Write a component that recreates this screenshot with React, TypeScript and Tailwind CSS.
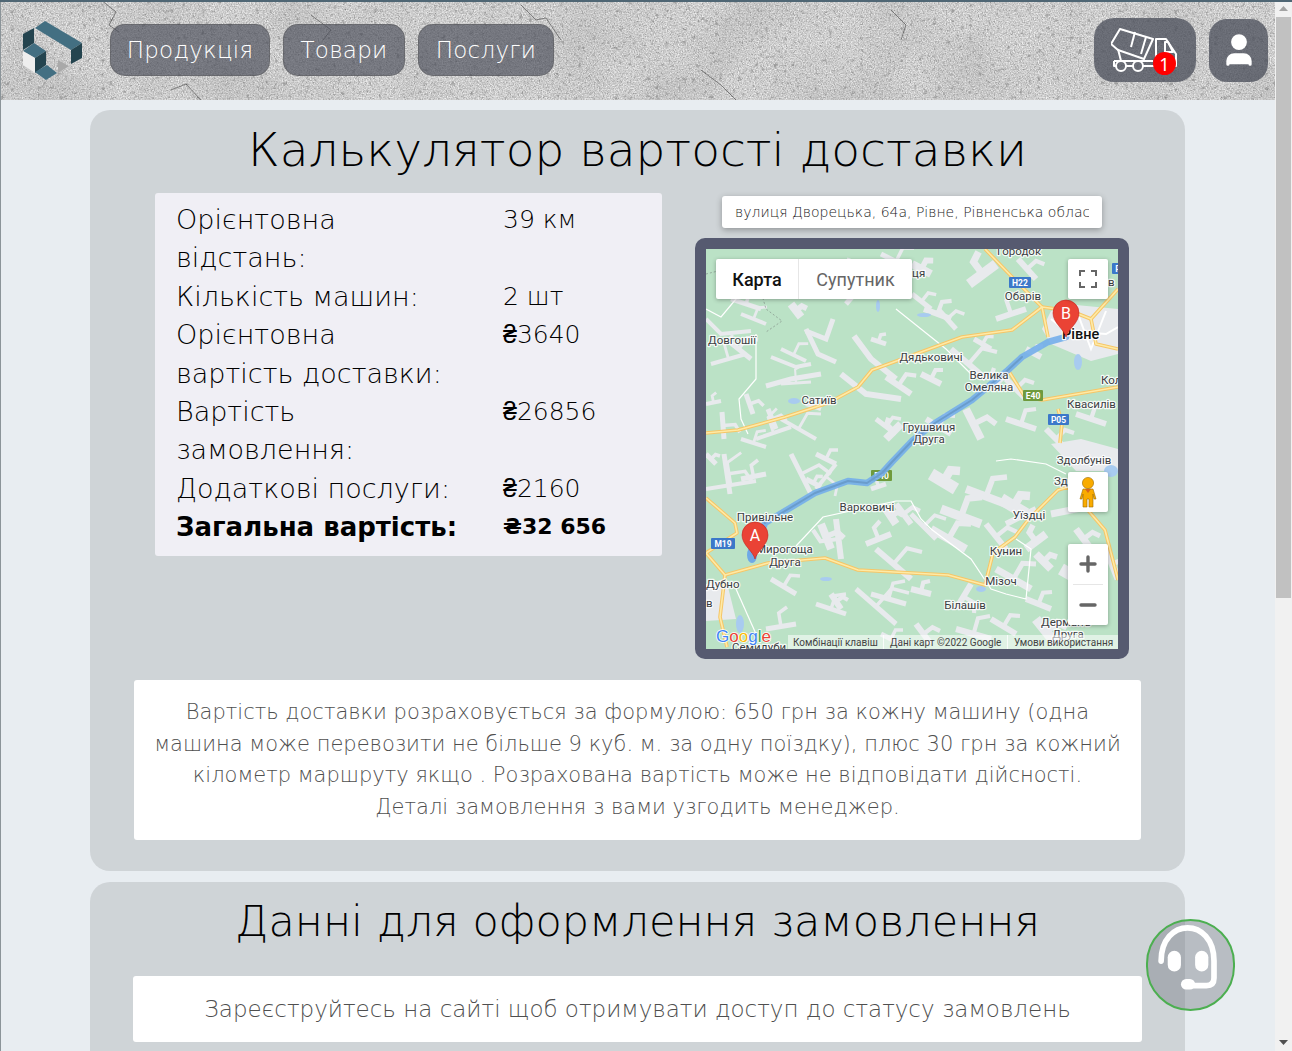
import React from 'react';
import { Plus, Minus, User } from 'lucide-react';

// grey built-up patches on the map: points, then stroke width
const patches: [string, number][] = [
  ['100,80 112,105 130,113', 5], ['127,70 120,90 100,82', 5], ['65,108 90,118 105,115', 4], ['75,100 100,112', 4],
  ['60,137 85,130 115,125', 5], ['75,135 105,133', 3], ['148,87 165,110 190,130', 6], ['165,90 180,95', 5],
  ['180,128 205,145', 6], ['135,125 160,145 195,150', 6], ['50,190 85,178', 4], ['62,160 70,180', 5],
  ['40,145 47,165', 5], ['16,163 18,190', 5], ['0,155 15,152', 4], ['5,115 40,105', 4], ['20,90 45,110', 5],
  ['25,50 55,60', 5], ['35,65 60,75', 4], ['85,55 95,68', 8], ['0,70 15,85 45,82', 4], ['100,155 115,160', 4],
  ['180,190 195,175', 8], ['170,170 190,185', 5], ['35,190 60,198', 4], ['75,170 110,190', 4], ['140,55 170,20', 5],
  ['263,35 290,15', 10], ['206,15 225,25', 8], ['218,60 245,70', 6], ['290,70 320,60', 6], ['232,60 250,80', 5],
  ['245,100 280,130', 6], ['268,90 285,100', 5], ['300,130 320,150', 6], ['215,125 235,135', 6], ['220,170 245,185', 6],
  ['260,160 275,190', 8], ['300,170 330,180', 6], ['340,180 360,200', 6], ['370,165 400,175', 6], ['285,140 300,125', 6],
  ['320,100 335,108', 6], ['206,45 225,60', 5], ['175,5 205,20', 5], ['312,10 330,30', 6],
  ['85,205 105,245', 5], ['18,205 24,245', 5], ['0,240 50,232', 4], ['35,230 60,225', 5], ['100,230 115,238', 5],
  ['110,205 130,215', 5], ['0,205 10,215', 5], ['130,215 110,240', 4], ['115,275 125,300', 8], ['165,240 180,235', 5],
  ['180,260 190,275', 8], ['135,310 130,270', 6], ['125,345 135,360', 6], ['65,330 90,345', 5], ['170,300 205,330', 6],
  ['190,255 205,275', 6], ['160,295 185,285', 6], ['165,345 200,355', 5], ['110,355 140,365', 5], ['150,340 190,375', 5],
  ['60,380 90,375', 5], ['175,385 195,395', 5], ['225,225 250,240', 12], ['235,260 275,275', 9], ['260,240 300,255', 8],
  ['205,265 230,290', 5], ['225,280 260,300', 8], ['295,250 320,265', 12], ['300,275 330,260', 6], ['280,275 300,300', 6],
  ['320,300 340,285', 8], ['345,265 395,255', 7], ['330,305 345,320', 8], ['355,320 390,340', 12], ['205,340 225,345', 6],
  ['265,335 250,360', 6], ['330,370 350,395', 10], ['320,350 345,360', 6], ['250,380 285,390', 6], ['210,375 225,395', 6],
  ['370,280 385,300', 7], ['290,320 325,340', 7], ['285,370 310,385', 6], ['400,300 412,330', 7],
];

// two-point patches get a short side branch so they read as irregular plots
const branch = (pts: string) => {
  const p = pts.split(' ').map((s) => s.split(',').map(Number));
  if (p.length !== 2) return null;
  const [[a, b], [c, d]] = p;
  const mx = (a + c) / 2;
  const my = (b + d) / 2;
  return `${mx},${my} ${mx + (d - b) * 0.45},${my - (c - a) * 0.45} ${mx + (c - a) * 0.3 + (d - b) * 0.6},${my + (d - b) * 0.3 - (c - a) * 0.6}`;
};

const yellowRoads = [
  '0,184 32,181 79,168 122,154 152,138 166,121 256,88 306,81 336,58 365,62 385,70 412,40',
  '279,0 310,32 336,58 342,88',
  '302,121 319,148 336,151 412,138',
  '352,160 356,174 354,194',
  '385,70 390,95 412,100',
  '19,326 62,314 119,309 152,321 242,326 279,336 287,304 309,288 322,271 352,241 362,238 399,281 412,331',
  '0,249 29,274 31,284 0,304 19,326 14,368 21,398',
];

const labels: [string, number, number, 'start' | 'middle' | 'end'][] = [
  ['Городок', 313, 6, 'middle'], ['ця', 206, 28, 'start'], ['Обарів', 317, 51, 'middle'], ['в', 402, 37, 'start'],
  ['Довгошії', 50, 95, 'end'], ['Дядьковичі', 225, 112, 'middle'], ['Велика', 283, 130, 'middle'], ['Омеляна', 283, 142, 'middle'],
  ['Сатиїв', 113, 155, 'middle'], ['Кол', 395, 135, 'start'], ['Квасилів', 361, 159, 'start'], ['Грушвиця', 223, 182, 'middle'],
  ['Друга', 223, 194, 'middle'], ['Здолбунів', 378, 215, 'middle'], ['Зд', 348, 236, 'start'], ['Привільне', 59, 272, 'middle'],
  ['Варковичі', 161, 262, 'middle'], ['Уїздці', 323, 270, 'middle'], ['Мирогоща', 50, 304, 'start'], ['Друга', 79, 317, 'middle'],
  ['Кунин', 300, 306, 'middle'], ['Дубно', 0, 339, 'start'], ['в', 0, 358, 'start'], ['Мізоч', 295, 336, 'middle'],
  ['Білашів', 259, 360, 'middle'], ['Дерманъ', 360, 377, 'middle'], ['Друга', 362, 389, 'middle'], ['Семидуби', 26, 402, 'start'],
];

const shields: [string, number, number, number, string][] = [
  ['H22', 303, 28, 22, '#3b78c9'], ['E40', 317, 141, 20, '#6f9a3d'], ['P05', 342, 165, 21, '#3b78c9'],
  ['E40', 165, 221, 21, '#6f9a3d'], ['M19', 5, 289, 24, '#3b78c9'], ['P', 406, 14, 12, '#3b78c9'],
];

const rows: [React.ReactNode, string][] = [
  [<>Орієнтовна<br />відстань:</>, '39 км'],
  ['Кількість машин:', '2 шт'],
  [<>Орієнтовна<br />вартість доставки:</>, '₴3640'],
  [<>Вартість<br />замовлення:</>, '₴26856'],
  ['Додаткові послуги:', '₴2160'],
];

const Pin = ({ x, y, letter }: { x: number; y: number; letter: string }) => (
  <g transform={`translate(${x} ${y})`}>
    <path d="M0,0 C-2,-8 -13,-14 -13,-24 A13,13 0 1 1 13,-24 C13,-14 2,-8 0,0Z" fill="#ea4335" stroke="#c5221f" strokeWidth="0.6" />
    <text x="0" y="-18" textAnchor="middle" fontSize="16" fill="#fff">{letter}</text>
  </g>
);

const MapDrawing = () => (
  <svg viewBox="0 0 412 400" className="block w-[412px] h-[400px] font-['Roboto',sans-serif]">
    <rect width="412" height="400" fill="#bbe2c6" />
    <g fill="#e8eaed" stroke="#e8eaed" strokeLinejoin="miter">
      {patches.map(([pts, w], i) => {
        const b = branch(pts);
        return (
          <g key={i}>
            <polyline points={pts} strokeWidth={w} fill="none" />
            {b && <polyline points={b} strokeWidth={w * 0.7} fill="none" />}
          </g>
        );
      })}
    </g>
    <polygon points="345,62 370,56 412,60 412,105 385,112 345,95 336,80" fill="#e8eaed" />
    <polygon points="345,195 375,190 412,200 412,222 370,222" fill="#e8eaed" />
    <polygon points="0,335 20,330 30,370 0,372" fill="#e8eaed" />
    {/* water */}
    <g fill="#a8cbf0">
      <ellipse cx="46" cy="306" rx="5" ry="8" fill="#6ea8e6" />
      <ellipse cx="34" cy="375" rx="4" ry="9" />
      <ellipse cx="372" cy="113" rx="4" ry="8" />
      <ellipse cx="88" cy="152" rx="6" ry="3" />
      <ellipse cx="218" cy="66" rx="7" ry="2" />
      <ellipse cx="275" cy="340" rx="5" ry="3" />
      <ellipse cx="405" cy="222" rx="7" ry="6" />
      <ellipse cx="172" cy="57" rx="2" ry="6" />
      <ellipse cx="120" cy="330" rx="6" ry="2" />
    </g>
    {/* small roads */}
    <g fill="none" stroke="#fff" strokeWidth="1.2">
      <polyline points="0,60 15,68 30,50 45,35" />
      <polyline points="50,85 50,130 33,150 35,170 42,185" />
      <polyline points="190,60 215,80 240,100 270,130" />
      <polyline points="90,297 117,268 190,252 205,252 215,270 225,280 265,310 285,340 300,345 320,350 325,300 310,290" />
      <polyline points="290,212 305,210 340,215 360,225" />
      <polyline points="345,70 360,82 400,85 412,78" strokeWidth="2" />
      <polyline points="370,60 385,100 400,62" strokeWidth="2" />
      <polyline points="30,340 50,385" />
    </g>
    <polyline points="0,25 20,20 50,25 60,60 76,72 60,83" fill="none" stroke="#8a9a90" strokeWidth="0.8" strokeDasharray="2 2" />
    <g fill="none" strokeLinejoin="round">
      {yellowRoads.map((d) => <polyline key={d} points={d} stroke="#f6c667" strokeWidth="3.6" />)}
      {yellowRoads.map((d) => <polyline key={d} points={d} stroke="#feeaa6" strokeWidth="1.6" />)}
    </g>
    {shields.map(([t, x, y, w, c], i) => (
      <g key={i}>
        <rect x={x} y={y} width={w} height="11" fill={c} rx="1" />
        <text x={x + w / 2} y={y + 8.5} textAnchor="middle" fontSize="8.5" fontWeight="700" fill="#fff">{t}</text>
      </g>
    ))}
    {/* route */}
    <g fill="none" strokeLinejoin="round" strokeLinecap="round">
      <polyline points="360,88 342,93 316,108 302,121 266,151 229,174 207,191 186,213 176,224 161,234 142,232 109,244 59,274 49,300" stroke="#74aeea" strokeWidth="6.5" opacity="0.9" />
      <polyline points="316,108 302,121 266,151 229,174 207,191 186,213 176,224 161,234 142,232 109,244 59,274" stroke="#6a9ccc" strokeWidth="2" />
    </g>
    <g fontSize="11.5" fill="#3c4043" stroke="#fff" strokeWidth="2.4" paintOrder="stroke" strokeLinejoin="round">
      {labels.map(([t, x, y, a], i) => <text key={i} x={x} y={y} textAnchor={a} strokeOpacity="0.85">{t}</text>)}
      <text x="356" y="90" fontSize="14.5" fontWeight="500" fill="#111">Рівне</text>
    </g>
    <Pin x={49} y={310} letter="A" />
    <Pin x={360} y={88} letter="B" />
    <text x="10" y="393" fontSize="17" fontFamily="Liberation Sans" stroke="#fff" strokeWidth="1.5" paintOrder="stroke">
      <tspan fill="#4285f4">G</tspan><tspan fill="#ea4335">o</tspan><tspan fill="#fbbc05">o</tspan><tspan fill="#4285f4">g</tspan><tspan fill="#34a853">l</tspan><tspan fill="#ea4335">e</tspan>
    </text>
  </svg>
);

const Concrete = () => (
  <svg className="absolute inset-0 w-full h-full" preserveAspectRatio="none">
    <defs>
      <filter id="grain" x="0" y="0" width="100%" height="100%">
        <feTurbulence type="fractalNoise" baseFrequency="0.75" numOctaves="3" seed="8" />
        <feColorMatrix type="matrix" values="0.55 0.55 0 0 0.07  0.55 0.55 0 0 0.07  0.55 0.55 0 0 0.07  0 0 0 0 1" />
      </filter>
      <filter id="specks" x="0" y="0" width="100%" height="100%">
        <feTurbulence type="fractalNoise" baseFrequency="0.22" numOctaves="3" seed="21" />
        <feColorMatrix type="matrix" values="0 0 0 0 0.2  0 0 0 0 0.2  0 0 0 0 0.2  5 0 0 0 -3.1" />
      </filter>
      <filter id="cloud" x="0" y="0" width="100%" height="100%">
        <feTurbulence type="fractalNoise" baseFrequency="0.015" numOctaves="3" seed="3" />
        <feColorMatrix type="matrix" values="0 0 0 0 0.25  0 0 0 0 0.25  0 0 0 0 0.25  1.2 0 0 0 -0.45" />
      </filter>
    </defs>
    <rect width="100%" height="100%" filter="url(#grain)" />
    <rect width="100%" height="100%" filter="url(#cloud)" opacity="0.3" />
    <rect width="100%" height="100%" filter="url(#specks)" opacity="0.55" />
    <g fill="none" stroke="#3a3a3a" strokeWidth="0.8" opacity="0.7">
      <path d="M100 0 L115 12 L108 25 L118 32" />
      <path d="M170 90 L185 84 L200 100" />
      <path d="M310 15 L330 30 L322 40" />
      <path d="M520 5 L535 20 L545 18 L560 40" />
      <path d="M700 70 L720 85 L735 100" />
      <path d="M890 10 L905 25 L900 40" />
    </g>
  </svg>
);

const navBtn = "flex items-center justify-center h-[52px] rounded-[15px] bg-[#484c58]/65 border border-[#555]/40 text-[23px] tracking-[0.01em] text-white";

export default function App() {
  return (
    <div className="flex h-screen overflow-hidden bg-[#e8edf1] border-t-[2px] border-[#4f6674] font-['DejaVu_Sans',sans-serif] font-extralight text-black">
      <div className="relative w-[1275px] shrink-0 -mt-[2px] border-l border-[#8b9499]">
        {/* header */}
        <header className="relative h-[100px] flex items-center justify-between overflow-hidden bg-[#aaaaaa] pr-[7px]">
          <Concrete />
          <div className="relative flex items-center -ml-[1px]">
            <svg viewBox="0 0 110 100" className="w-[110px] h-[100px]">
              <polygon points="35,28 45,21 82,43 71,50" fill="#436f82" />
              <polygon points="71,50 82,43 82,58 71,64" fill="#24444f" />
              <polygon points="23,34 34,28 34,43 23,50" fill="#24444f" />
              <polygon points="23,51 34,43 46,51 35,58" fill="#436f82" />
              <polygon points="23,51 35,58 35,73 23,65" fill="#eeeeee" />
              <polygon points="35,58 46,51 46,65 35,73" fill="#24444f" />
              <polygon points="35,72 47,65 57,73 46,80" fill="#436f82" />
              <polygon points="58,60 58,73 69,66" fill="#a9a9a9" />
            </svg>
            <nav className="flex gap-[13px]">
              <div className={`${navBtn} w-[160px]`}>Продукція</div>
              <div className={`${navBtn} w-[122px]`}>Товари</div>
              <div className={`${navBtn} w-[136px]`}>Послуги</div>
            </nav>
          </div>
          <div className="relative flex items-center gap-[13px]">
            <div className="relative flex items-center justify-center w-[102px] h-[64px] rounded-[20px] bg-[#484c58]/75">
              <svg viewBox="0 0 68 46" className="w-[68px] h-[46px] mt-[1px]" fill="none" stroke="#fff" strokeWidth="2" strokeLinejoin="round">
                <polygon points="9,1 42,11 33,31 7,22 0,16" />
                <path d="M24 4 L20 19 M35 9 L30 26" />
                <path d="M7 21 L10 33 M3 33 H42 M3 33 V38 H5 M15 38 H22 M32 38 H46" />
                <circle cx="10" cy="38" r="5" />
                <circle cx="27" cy="38" r="5" />
                <path d="M45 33 V11 H55 L65 26 V38 H60" />
                <path d="M54 14 H57 L62 24 H54 Z" />
              </svg>
              <span className="absolute left-[59px] top-[34px] flex items-center justify-center w-[23px] h-[23px] rounded-full bg-[#ff0000] text-[18px] font-normal font-['Noto_Sans',sans-serif] leading-none text-white">1</span>
            </div>
            <div className="flex items-center justify-center w-[59px] h-[63px] rounded-[18px] bg-[#484c58]/75">
              <User size={38} fill="#fff" stroke="#fff" strokeWidth={2} />
            </div>
          </div>
        </header>

        <main className="pl-[89px] pr-[90px] pt-[10px] flex flex-col gap-[11px]">
          {/* calculator */}
          <section className="h-[761px] rounded-[20px] bg-[#cfd4d7]">
            <h1 className="h-[83px] pt-[10px] text-center text-[47px] leading-[60px] font-extralight whitespace-nowrap">Калькулятор вартості доставки</h1>
            <div className="flex items-start pl-[65px]">
              <div className="w-[507px] h-[363px] rounded-[3px] bg-[#f0eff5] pl-[21px] pt-[8px] text-[27px] leading-[38.4px]">
                <div className="grid grid-cols-[327px_1fr]">
                  {rows.map(([label, value], i) => (
                    <React.Fragment key={i}>
                      <div>{label}</div>
                      <div className="text-[25px]">{value}</div>
                    </React.Fragment>
                  ))}
                  <div className="font-bold text-[26px] whitespace-nowrap">Загальна вартість:</div>
                  <div className="font-bold text-[22px]">₴32 656</div>
                </div>
              </div>
              <div className="ml-[33px] w-[434px] pt-[3px] flex flex-col items-center gap-[10px]">
                <input readOnly value="вулиця Дворецька, 64а, Рівне, Рівненська область, Україна" className="w-[380px] h-[32px] rounded-[3px] bg-white px-[13px] text-[14px] text-[#222] shadow-[0_2px_6px_rgba(0,0,0,0.3)] outline-none" />
                <div className="relative w-[434px] h-[421px] rounded-[10px] bg-[#565a70] p-[11px]">
                  <div className="relative w-[412px] h-[400px] overflow-hidden font-['Roboto',sans-serif] font-normal">
                    <MapDrawing />
                    <div className="absolute left-[10px] top-[10px] flex h-[40px] rounded-[2px] bg-white text-[18px] shadow-[0_1px_4px_rgba(0,0,0,0.3)]">
                      <span className="flex items-center justify-center w-[83px] border-r border-[#e6e6e6] text-[#111] font-medium">Карта</span>
                      <span className="flex items-center justify-center w-[113px] text-[#666]">Супутник</span>
                    </div>
                    <div className="absolute left-[362px] top-[10px] flex items-center justify-center w-[40px] h-[40px] rounded-[2px] bg-white shadow-[0_1px_4px_rgba(0,0,0,0.3)]">
                      <svg viewBox="0 0 18 18" className="w-[18px] h-[18px]" fill="none" stroke="#666" strokeWidth="2"><path d="M1 6 V1 H6 M12 1 H17 V6 M17 12 V17 H12 M6 17 H1 V12" /></svg>
                    </div>
                    <div className="absolute left-[362px] top-[223px] flex items-center justify-center w-[40px] h-[40px] rounded-[2px] bg-white shadow-[0_1px_4px_rgba(0,0,0,0.3)]">
                      <svg viewBox="0 0 40 40" className="w-[40px] h-[40px]" fill="#f9ab00" stroke="#9a6a00" strokeWidth="0.6">
                        <circle cx="20" cy="11" r="5.6" />
                        <path d="M15 17 H25 L28 27 H26 L25 22 V35 H21 V27 H19 V35 H15 V22 L14 27 H12 Z" />
                        <path d="M17 17 L20 21 L23 17 Z" fill="#d6651f" stroke="none" />
                      </svg>
                    </div>
                    <div className="absolute left-[362px] top-[295px] flex flex-col items-center w-[40px] h-[81px] rounded-[2px] bg-white shadow-[0_1px_4px_rgba(0,0,0,0.3)]">
                      <span className="flex items-center justify-center h-[40px]"><Plus size={24} color="#666" strokeWidth={3.4} absoluteStrokeWidth /></span>
                      <span className="w-[30px] h-px bg-[#e6e6e6]" />
                      <span className="flex items-center justify-center h-[40px]"><Minus size={24} color="#666" strokeWidth={3.4} absoluteStrokeWidth /></span>
                    </div>
                    <div className="absolute right-0 bottom-0 flex items-center w-[330px] h-[14px] bg-white/55 pl-[5px] text-[10px] text-[#444] whitespace-nowrap">
                      <span className="w-[91px] border-r border-white/80">Комбінації клавіш</span>
                      <span className="w-[124px] pl-[6px] border-r border-white/80">Дані карт ©2022 Google</span>
                      <span className="pl-[6px]">Умови використання</span>
                    </div>
                  </div>
                </div>
              </div>
            </div>
            <div className="mt-[21px] ml-[44px] w-[1007px] h-[160px] rounded-[3px] bg-white pt-[17px] text-center text-[21px] leading-[31.7px] text-[#4f4f4f]">
              Вартість доставки розраховується за формулою: 650 грн за кожну машину (одна<br />
              машина може перевозити не більше 9 куб. м. за одну поїздку), плюс 30 грн за кожний<br />
              кілометр маршруту якщо . Розрахована вартість може не відповідати дійсності.<br />
              Деталі замовлення з вами узгодить менеджер.
            </div>
          </section>

          {/* order data */}
          <section className="h-[400px] rounded-[20px] bg-[#cfd4d7]">
            <h2 className="h-[94px] pt-[9px] text-center text-[43px] leading-[60px] font-extralight whitespace-nowrap">Данні для оформлення замовлення</h2>
            <div className="ml-[43px] flex items-center justify-center w-[1009px] h-[66px] rounded-[3px] bg-white text-[23px] text-[#4f4f4f]">
              Зареєструйтесь на сайті щоб отримувати доступ до статусу замовлень
            </div>
          </section>
        </main>

        {/* support button */}
        <div className="absolute right-[40px] top-[919px] w-[89px] h-[92px] rounded-full border-[2.5px] border-[#4caf50] bg-[#70757f]/40">
          <svg viewBox="0 0 90 92" className="w-full h-full -m-[2.5px] overflow-visible" fill="#fff">
            <path d="M16 44 C16 -3 72 -3 72 44 V62 Q72 70 64 70 H50" fill="none" stroke="#fff" strokeWidth="6" strokeLinecap="round" />
            <rect x="23" y="33" width="14" height="22" rx="7" />
            <rect x="52" y="33" width="14" height="22" rx="7" />
            <rect x="37" y="63" width="15" height="11" rx="5.5" />
          </svg>
        </div>
      </div>

      {/* scrollbar */}
      <div className="flex flex-col w-[17px] shrink-0 -mt-[2px] bg-[#f1f1f1]">
        <div className="flex items-center justify-center h-[17px]">
          <svg viewBox="0 0 9 5" className="w-[9px] h-[5px]" fill="#a3a3a3"><path d="M4.5 0 L9 5 H0 Z" /></svg>
        </div>
        <div className="ml-px w-[15px] h-[581px] bg-[#c1c1c1]" />
        <div className="flex-1" />
        <div className="flex items-center justify-center h-[17px]">
          <svg viewBox="0 0 9 5" className="w-[9px] h-[5px]" fill="#505050"><path d="M0 0 H9 L4.5 5 Z" /></svg>
        </div>
      </div>
    </div>
  );
}
